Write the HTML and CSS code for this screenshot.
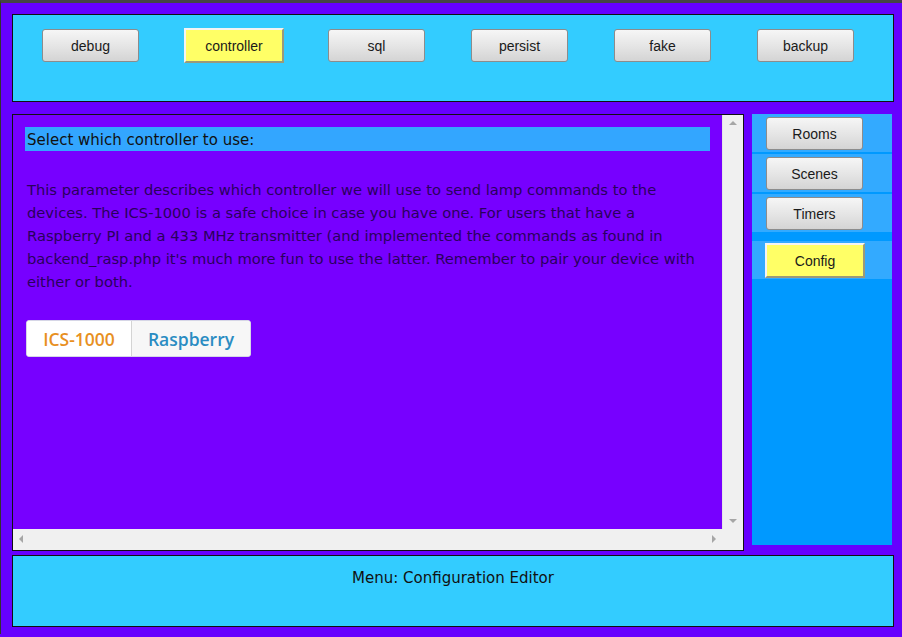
FILE: index.html
```
<!DOCTYPE html>
<html>
<head>
<meta charset="utf-8">
<title>Configuration Editor</title>
<link rel="stylesheet" href="styles.css">
</head>
<body>
<div class="page">
  <div class="topbar">
    <button class="btn">debug</button>
    <button class="btn btn-active">controller</button>
    <button class="btn">sql</button>
    <button class="btn">persist</button>
    <button class="btn">fake</button>
    <button class="btn">backup</button>
  </div>

  <div class="middle">
    <div class="main">
      <div class="content">
        <div class="heading">Select which controller to use:</div>
        <p class="desc">This parameter describes which controller we will use to send lamp commands to the devices. The ICS-1000 is a safe choice in case you have one. For users that have a Raspberry PI and a 433 MHz transmitter (and implemented the commands as found in backend_rasp.php it's much more fun to use the latter. Remember to pair your device with either or both.</p>
        <div class="segment">
          <span class="seg seg-on">ICS-1000</span>
          <span class="seg seg-off">Raspberry</span>
        </div>
      </div>
      <div class="vscroll">
        <span class="arrow arrow-up"></span>
        <span class="arrow arrow-down"></span>
      </div>
      <div class="hscroll">
        <span class="arrow arrow-left"></span>
        <span class="arrow arrow-right"></span>
      </div>
      <div class="corner"></div>
    </div>

    <div class="sidebar">
      <div class="side-row"><button class="btn">Rooms</button></div>
      <div class="side-row"><button class="btn">Scenes</button></div>
      <div class="side-row"><button class="btn">Timers</button></div>
      <div class="side-row side-row-sep"><button class="btn btn-active">Config</button></div>
    </div>
  </div>

  <div class="footer">Menu: Configuration Editor</div>
</div>
</body>
</html>
```

FILE: styles.css
```
html, body {
  margin: 0;
  padding: 0;
}

body {
  background: #6600ff;
  border-top: 3px solid #454545;
  border-left: 1px solid #333;
  height: 634px;
  box-sizing: border-box;
  overflow: hidden;
  font-family: "DejaVu Sans", Verdana, sans-serif;
}

.page {
  padding: 11px 0 0 11px;
}

.btn {
  font-family: "Liberation Sans", Arial, sans-serif;
  font-size: 14px;
  color: #1a1a1a;
  width: 97px;
  height: 33px;
  padding: 0;
  border: 1px solid #8c8c8c;
  border-radius: 3px;
  background: linear-gradient(#f6f6f6, #e4e4e4 55%, #d4d4d4);
  box-sizing: border-box;
}

.btn-active {
  width: 100px;
  height: 35px;
  border: 2px solid;
  border-color: #f4f4f4 #9a9a7a #9a9a7a #f4f4f4;
  border-radius: 0;
  background: #ffff66;
}

.topbar {
  width: 882px;
  height: 88px;
  box-sizing: border-box;
  border: 1px solid #111;
  background: #33ccff;
  display: flex;
  align-items: flex-start;
  gap: 46px;
  padding: 14px 0 0 29px;
}

.topbar .btn-active {
  margin: -1px -2px 0 -1px;
}

.middle {
  display: flex;
  align-items: flex-start;
  gap: 8px;
  margin-top: 12px;
}

.main {
  width: 732px;
  height: 437px;
  box-sizing: border-box;
  border: 1px solid #111;
  display: grid;
  grid-template-columns: 1fr 21px;
  grid-template-rows: 1fr 21px;
  background: #f0f0f0;
}

.content {
  background: #7700ff;
  padding: 12px 0 0 12px;
  overflow: hidden;
}

.heading {
  width: 685px;
  height: 24px;
  box-sizing: border-box;
  background: #33a6ff;
  color: #111;
  font-size: 15px;
  line-height: 27px;
  padding-left: 2px;
  overflow: hidden;
}

.desc {
  margin: 27px 0 0 2px;
  width: 685px;
  font-size: 14.7px;
  line-height: 23px;
  color: #2a005c;
}

.segment {
  display: inline-flex;
  margin: 27px 0 0 1px;
  height: 37px;
  box-sizing: border-box;
  border: 1px solid #d6d6e6;
  border-radius: 3px;
  background: #fff;
  overflow: hidden;
  font-family: "Open Sans", sans-serif;
  font-weight: 600;
  font-size: 17.5px;
}

.seg {
  display: flex;
  align-items: center;
  justify-content: center;
}

.seg-on {
  width: 104px;
  color: #e8901f;
  background: #fff;
  border-right: 1px solid #d4d4d4;
}

.seg-off {
  width: 118px;
  color: #2a8cc2;
  background: #f7f7f7;
}

.vscroll, .hscroll, .corner {
  background: #f0f0f0;
  position: relative;
}

.vscroll {
  border-left: 1px solid #e6e6e6;
}

.arrow {
  position: absolute;
  width: 0;
  height: 0;
  border: 4px solid transparent;
}

.arrow-up {
  left: 6px;
  top: 6px;
  border-bottom-color: #a6a6a6;
  border-top-width: 0;
}

.arrow-down {
  left: 6px;
  bottom: 6px;
  border-top-color: #a6a6a6;
  border-bottom-width: 0;
}

.arrow-left {
  left: 6px;
  top: 6px;
  border-right-color: #a6a6a6;
  border-left-width: 0;
}

.arrow-right {
  right: 6px;
  top: 6px;
  border-left-color: #a6a6a6;
  border-right-width: 0;
}

.sidebar {
  width: 140px;
  height: 431px;
  background: #0099ff;
  display: flex;
  flex-direction: column;
  gap: 2px;
}

.side-row {
  height: 38px;
  box-sizing: border-box;
  background: #33aaff;
  padding: 3px 0 0 14px;
}

.side-row-sep {
  margin-top: 7px;
  padding: 2px 0 0 13px;
}

.footer {
  width: 882px;
  height: 72px;
  box-sizing: border-box;
  margin-top: 4px;
  border: 1px solid #111;
  background: #33ccff;
  text-align: center;
  font-size: 15px;
  color: #111;
  padding-top: 12px;
  line-height: 20px;
}
```
